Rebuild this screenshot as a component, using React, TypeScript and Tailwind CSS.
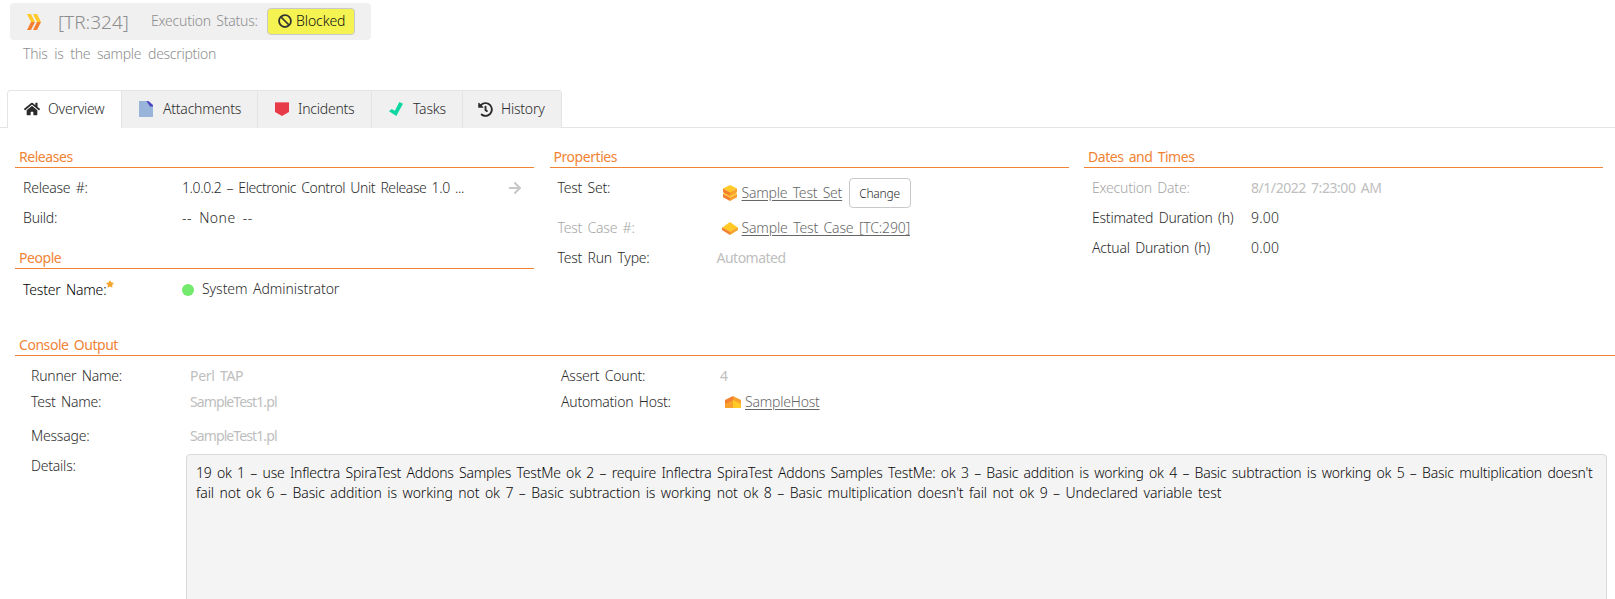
import type { ReactNode } from "react";
import { FaBan, FaHistory, FaHome, FaArrowRight, FaStar } from "react-icons/fa";

function TestRunIcon() {
  return (
    <svg width="14" height="16" viewBox="0 0 14 16">
      <path d="M0 0h4l4 8H4z" fill="#ffc928" />
      <path d="M6 0h4l4 8h-4z" fill="#ffc928" />
      <path d="M0 16h4l4-8H4z" fill="#f37f2f" />
      <path d="M6 16h4l4-8h-4z" fill="#f37f2f" />
    </svg>
  );
}

function AttachmentIcon() {
  return (
    <svg width="14" height="16" viewBox="0 0 14 16">
      <path d="M0 0h8l6 5v11H0z" fill="#98b4da" />
      <path d="M7.5 0h2L14 4v1.5h-3z" fill="#4a44c0" />
    </svg>
  );
}

function IncidentIcon() {
  return (
    <svg width="14" height="14" viewBox="0 0 14 14">
      <path d="M0 0h14v10l-7 4-7-4z" fill="#e83b4a" />
      <path d="M0 0h14v1H0z" fill="#f07a83" />
    </svg>
  );
}

function TaskIcon() {
  return (
    <svg width="14" height="14" viewBox="0 0 14 14">
      <path d="M0 9.3 2.6 7l3.3 1.8L10.3 0 14 1.8 7.3 14z" fill="#0fd7a2" />
    </svg>
  );
}

function TestSetIcon() {
  return (
    <svg width="14" height="16" viewBox="0 0 14 16">
      <path d="M0 8.5 7 5l7 3.5-7 4z" fill="#ffc928" />
      <path d="M0 8.7l7 3.8V16l-7-3.7z" fill="#f37f2f" />
      <path d="M14 8.7l-7 3.8V16l7-3.7z" fill="#f8a12c" />
      <path d="M0 3.6 7 0l7 3.6-7 3.8z" fill="#ffc928" />
      <path d="M0 3.6l7 3.8V11L0 7.2z" fill="#f37f2f" />
      <path d="M14 3.6L7 7.4V11l7-3.8z" fill="#f8a12c" />
    </svg>
  );
}

function TestCaseIcon() {
  return (
    <svg width="16" height="13" viewBox="0 0 16 13">
      <path d="M0 5.8 8 0l8 5.8L8 10z" fill="#ffc928" />
      <path d="M0 5.6l8 4.2V13L0 8z" fill="#f37f2f" />
      <path d="M16 5.6L8 9.8V13l8-5z" fill="#f8a12c" />
    </svg>
  );
}

function HostIcon() {
  return (
    <svg width="16" height="12" viewBox="0 0 16 12">
      <path d="M0 4v8h8V3z" fill="#f8a12c" />
      <path d="M16 4v8H8V3z" fill="#ffc928" />
      <path d="M0 4 8 0v4L0 8z" fill="#f37f2f" />
      <path d="M16 4 8 0v4l8 4z" fill="#f8a12c" />
    </svg>
  );
}

function SectionTitle({ children }: { children: ReactNode }) {
  return (
    <h2 className="h-[22px] border-b border-[#f18334] pt-px pl-1 text-sm leading-5 font-normal tracking-[-0.45px] text-[#f18334]">
      {children}
    </h2>
  );
}

function Row({ label, children, muted, className = "h-[30px]" }: {
  label: ReactNode;
  children: ReactNode;
  muted?: boolean;
  className?: string;
}) {
  return (
    <div className={`flex items-start ${className}`}>
      <div className={`w-[159px] shrink-0 ${muted ? "text-[#a6a6a6]" : ""}`}>{label}</div>
      {children}
    </div>
  );
}

function Tab({ icon, children, className }: { icon: ReactNode; children: ReactNode; className: string }) {
  return (
    <div className={`flex items-center border-r border-[#e4e4e4] ${className}`}>
      {icon}
      {children}
    </div>
  );
}

const MUTED = "font-normal text-[#bebebe]";
const LINK = "text-[#666] underline underline-offset-2";

export default function App() {
  return (
    <div className="h-[599px] overflow-hidden bg-white pt-[3px] font-['Noto_Sans',sans-serif] text-sm leading-5 font-light tracking-[-0.22px] whitespace-nowrap text-[#2b2b2b] [word-spacing:2px]">
      <header className="ml-[10px] h-[87px] text-[#8e8e8e]">
        <div className="flex h-[37px] w-[361px] items-center rounded bg-[#f0f0f0] pl-[17px]">
          <TestRunIcon />
          <h1 className="ml-[17px] w-[93px] text-[19px] leading-6 tracking-[0px]">[TR:324]</h1>
          <span className="w-[116px] pb-px">Execution Status:</span>
          <span className="-mt-px flex h-[27px] w-[88px] items-center rounded border border-[#c9c9c9] bg-[#f4f352] pl-[10px] tracking-[-0.1px] text-[#111]">
            <FaBan className="mr-1 size-[14px] text-[#333]" />
            Blocked
          </span>
        </div>
        <p className="mt-1 ml-[13px] tracking-[-0.3px] [word-spacing:3.5px]">This is the sample description</p>
      </header>

      <nav className="flex h-[38px] border-b border-[#e4e4e4] pl-[7px]">
        <div className="flex h-[38px] overflow-hidden rounded-t border-t border-l border-[#e4e4e4] bg-[#f0f0f0]">
          <Tab className="h-[38px] w-[114px] bg-white pb-[3px] pl-4" icon={<FaHome className="mr-2 size-4" />}>Overview</Tab>
          <Tab className="h-[37px] w-[136px] pb-px pl-[17px]" icon={<span className="mr-[10px]"><AttachmentIcon /></span>}>Attachments</Tab>
          <Tab className="h-[37px] w-[114px] pb-px pl-[17px]" icon={<span className="mr-[9px]"><IncidentIcon /></span>}>Incidents</Tab>
          <Tab className="h-[37px] w-[91px] pb-px pl-[17px]" icon={<span className="mr-[10px]"><TaskIcon /></span>}>Tasks</Tab>
          <Tab className="h-[37px] w-[99px] pb-px pl-[15px]" icon={<FaHistory className="mr-2 size-[15px]" />}>History</Tab>
        </div>
      </nav>

      <main>
        <div className="flex h-[188px] gap-[15.5px] pt-[18px] pl-[15px]">
          <section className="w-[519px]">
            <SectionTitle>Releases</SectionTitle>
            <div className="h-[79px] pt-[10px] pl-2">
              <Row label="Release #:">
                <span className="w-[326px] tracking-[-0.42px]">1.0.0.2 – Electronic Control Unit Release 1.0 ...</span>
                <FaArrowRight className="mt-[3px] size-[14px] text-[#c8c8c8]" />
              </Row>
              <Row label="Build:"><span className="tracking-[0.5px] [word-spacing:3px]">-- None --</span></Row>
            </div>
            <SectionTitle>People</SectionTitle>
            <div className="pt-[10px] pl-2">
              <Row
                label={
                  <span className="flex pt-px tracking-[-0.2px] text-black">
                    Tester Name:<FaStar className="size-2 text-[#f5a52c]" />
                  </span>
                }
              >
                <span className="mt-[5px] mr-2 size-3 rounded-full bg-[#73e96d]" />
                <span className="tracking-[-0.05px]">System Administrator</span>
              </Row>
            </div>
          </section>

          <section className="w-[519px]">
            <SectionTitle>Properties</SectionTitle>
            <div className="pt-[10px] pl-2">
              <Row label="Test Set:" className="h-10">
                <div className="flex h-[30px] items-center pl-[6px]">
                  <TestSetIcon />
                  <a className={`ml-[5px] w-[107px] ${LINK}`}>Sample Test Set</a>
                  <button className="h-[30px] w-[62px] rounded border border-[#c9c9c9] pt-px text-xs">Change</button>
                </div>
              </Row>
              <Row label="Test Case #:" muted>
                <div className="flex items-center pl-[5px]">
                  <TestCaseIcon />
                  <a className={`ml-1 tracking-[-0.15px] ${LINK}`}>Sample Test Case [TC:290]</a>
                </div>
              </Row>
              <Row label="Test Run Type:"><span className={`tracking-[-0.5px] ${MUTED}`}>Automated</span></Row>
            </div>
          </section>

          <section className="w-[519px]">
            <SectionTitle>Dates and Times</SectionTitle>
            <div className="pt-[10px] pl-2">
              <Row label="Execution Date:" muted><span className={`tracking-[-0.45px] ${MUTED}`}>8/1/2022 7:23:00 AM</span></Row>
              <Row label="Estimated Duration (h)"><span className="tracking-[0.2px]">9.00</span></Row>
              <Row label="Actual Duration (h)"><span className="tracking-[0.2px]">0.00</span></Row>
            </div>
          </section>
        </div>

        <section className="pt-[18px] pl-[15px]">
          <SectionTitle>Console Output</SectionTitle>
          <div className="pt-[10px] pl-4">
            <div className="flex">
              <div className="w-[530px]">
                <Row label="Runner Name:" className="h-[26px]"><span className={`tracking-[-0.3px] ${MUTED}`}>Perl TAP</span></Row>
                <Row label="Test Name:" className="h-[34px]"><span className={`tracking-[-0.9px] ${MUTED}`}>SampleTest1.pl</span></Row>
              </div>
              <div>
                <Row label="Assert Count:" className="h-[26px]"><span className={MUTED}>4</span></Row>
                <Row label="Automation Host:" className="h-[34px]">
                  <div className="flex items-center pl-[5px]">
                    <HostIcon />
                    <a className={`ml-1 ${LINK}`}>SampleHost</a>
                  </div>
                </Row>
              </div>
            </div>
            <Row label="Message:" className="h-[28px]"><span className={`tracking-[-0.9px] ${MUTED}`}>SampleTest1.pl</span></Row>
            <div className="flex">
              <div className="w-[155px] pt-[2px]">Details:</div>
              <div className="h-[160px] w-[1421px] rounded border border-[#d9d9d9] bg-[#f4f4f4] px-[9px] pt-2 text-[#0a0a0a]">
                <p>19 ok 1 – use Inflectra SpiraTest Addons Samples TestMe ok 2 – require Inflectra SpiraTest Addons Samples TestMe: ok 3 – Basic addition is working ok 4 – Basic subtraction is working ok 5 – Basic multiplication doesn't</p>
                <p className="tracking-[-0.1px]">fail not ok 6 – Basic addition is working not ok 7 – Basic subtraction is working not ok 8 – Basic multiplication doesn't fail not ok 9 – Undeclared variable test</p>
              </div>
            </div>
          </div>
        </section>
      </main>
    </div>
  );
}
